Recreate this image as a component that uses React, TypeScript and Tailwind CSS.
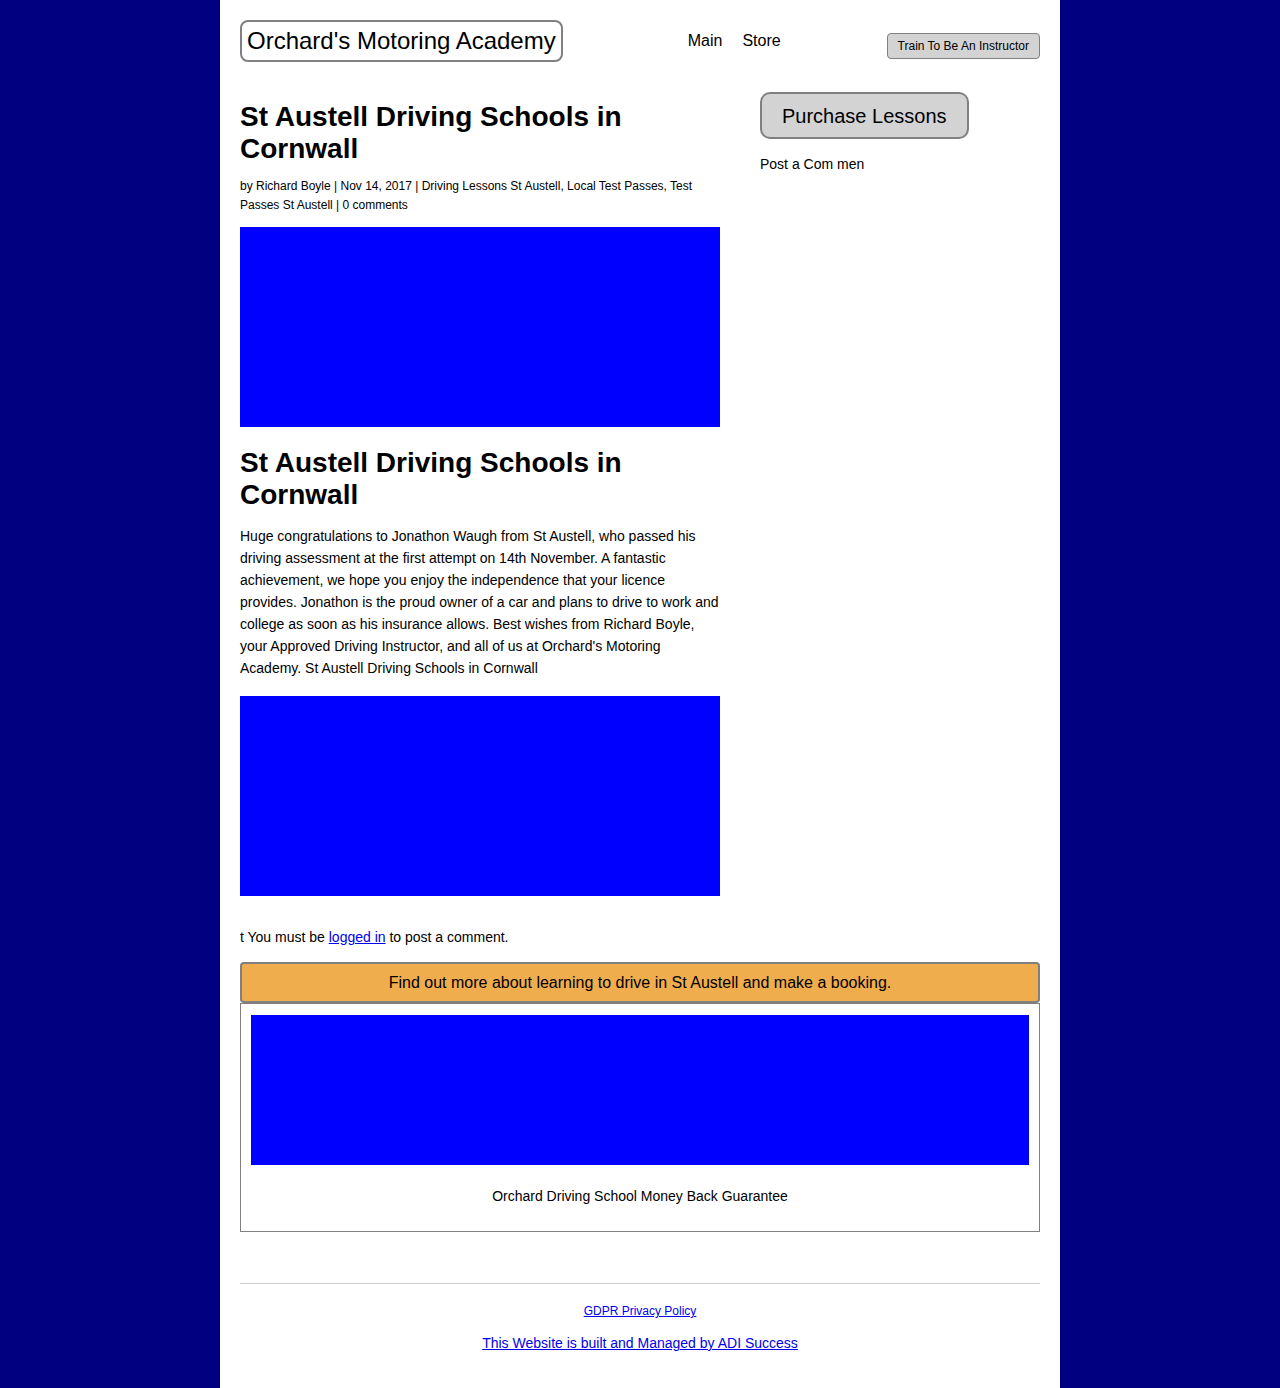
export default function App() {
  const font = { fontFamily: '"Liberation Sans", Arial, sans-serif' };

  return (
    <div style={font} className="min-h-[1388px] bg-[#000080] text-black">
      <div className="mx-auto w-[840px] min-h-[1388px] bg-white px-5 pt-5 pb-[24px]">
        {/* ── Header ─────────────────────────────────────────── */}
        <header className="flex items-start">
          <div className="h-[42px] border-2 border-[#808080] rounded-[8px] px-[5px] flex items-center text-[24px] leading-none whitespace-nowrap">
            Orchard's Motoring Academy
          </div>
          <nav className="ml-[125px] mt-[11px] flex gap-5 text-[16px] leading-5">
            <a>Main</a>
            <a>Store</a>
          </nav>
          <button className="ml-auto mt-[13px] h-[26px] px-[10px] bg-[#d3d3d3] border border-[#808080] rounded-[4px] text-[12px] leading-none">
            Train To Be An Instructor
          </button>
        </header>

        {/* ── Main + sidebar ─────────────────────────────────── */}
        <div className="flex gap-10 mt-[30px]">
          <main className="w-[480px] shrink-0 pt-[9px]">
            <h1 className="text-[28px] leading-[32px] font-bold">St Austell Driving Schools in Cornwall</h1>
            <p className="mt-[12px] text-[12px] leading-[19px]">
              by Richard Boyle | Nov 14, 2017 | Driving Lessons St Austell, Local Test Passes, Test Passes St Austell | 0 comments
            </p>
            <div className="mt-3 h-[200px] bg-[#0000ff]" />

            <h2 className="mt-[20px] text-[28px] leading-[32px] font-bold">St Austell Driving Schools in Cornwall</h2>
            <p className="mt-[14px] text-[14px] leading-[22px]">
              Huge congratulations to Jonathon Waugh from St Austell, who passed his driving assessment at the first attempt on 14th November. A fantastic achievement, we hope you enjoy the independence that your licence provides. Jonathon is the proud owner of a car and plans to drive to work and college as soon as his insurance allows. Best wishes from Richard Boyle, your Approved Driving Instructor, and all of us at Orchard's Motoring Academy. St Austell Driving Schools in Cornwall
            </p>
            <div className="mt-[17px] h-[200px] bg-[#0000ff]" />
          </main>

          <aside className="w-[280px]">
            <button className="h-[47px] px-[20px] bg-[#d3d3d3] border-2 border-[#808080] rounded-[10px] text-[20px] leading-none">
              Purchase Lessons
            </button>
            <p className="mt-[15px] text-[14px] leading-5">Post a Com men</p>
          </aside>
        </div>

        {/* ── Comment + booking ──────────────────────────────── */}
        <p className="mt-[31px] text-[14px] leading-5">
          t You must be <a className="text-[#0000ee] underline">logged in</a> to post a comment.
        </p>
        <div className="mt-[15px] h-[41px] bg-[#f0ad4e] border-2 border-[#808080] rounded-[4px] flex items-center justify-center text-[16px]">
          Find out more about learning to drive in St Austell and make a booking.
        </div>
        <div className="border border-[#808080] px-[10px] pt-[11px] pb-[25px]">
          <div className="h-[150px] bg-[#0000ff]" />
          <p className="mt-[21px] text-center text-[14px] leading-5">Orchard Driving School Money Back Guarantee</p>
        </div>

        {/* ── Footer ─────────────────────────────────────────── */}
        <footer className="mt-[51px] border-t border-[#cccccc] pt-[14px] text-center">
          <a className="text-[12px] leading-4 text-[#0000ee] underline">GDPR Privacy Policy</a>
          <p className="mt-[11px] text-[14px] leading-5">
            <a className="text-[#0000ee] underline">This Website is built and Managed by ADI Success</a>
          </p>
        </footer>
      </div>
    </div>
  );
}
